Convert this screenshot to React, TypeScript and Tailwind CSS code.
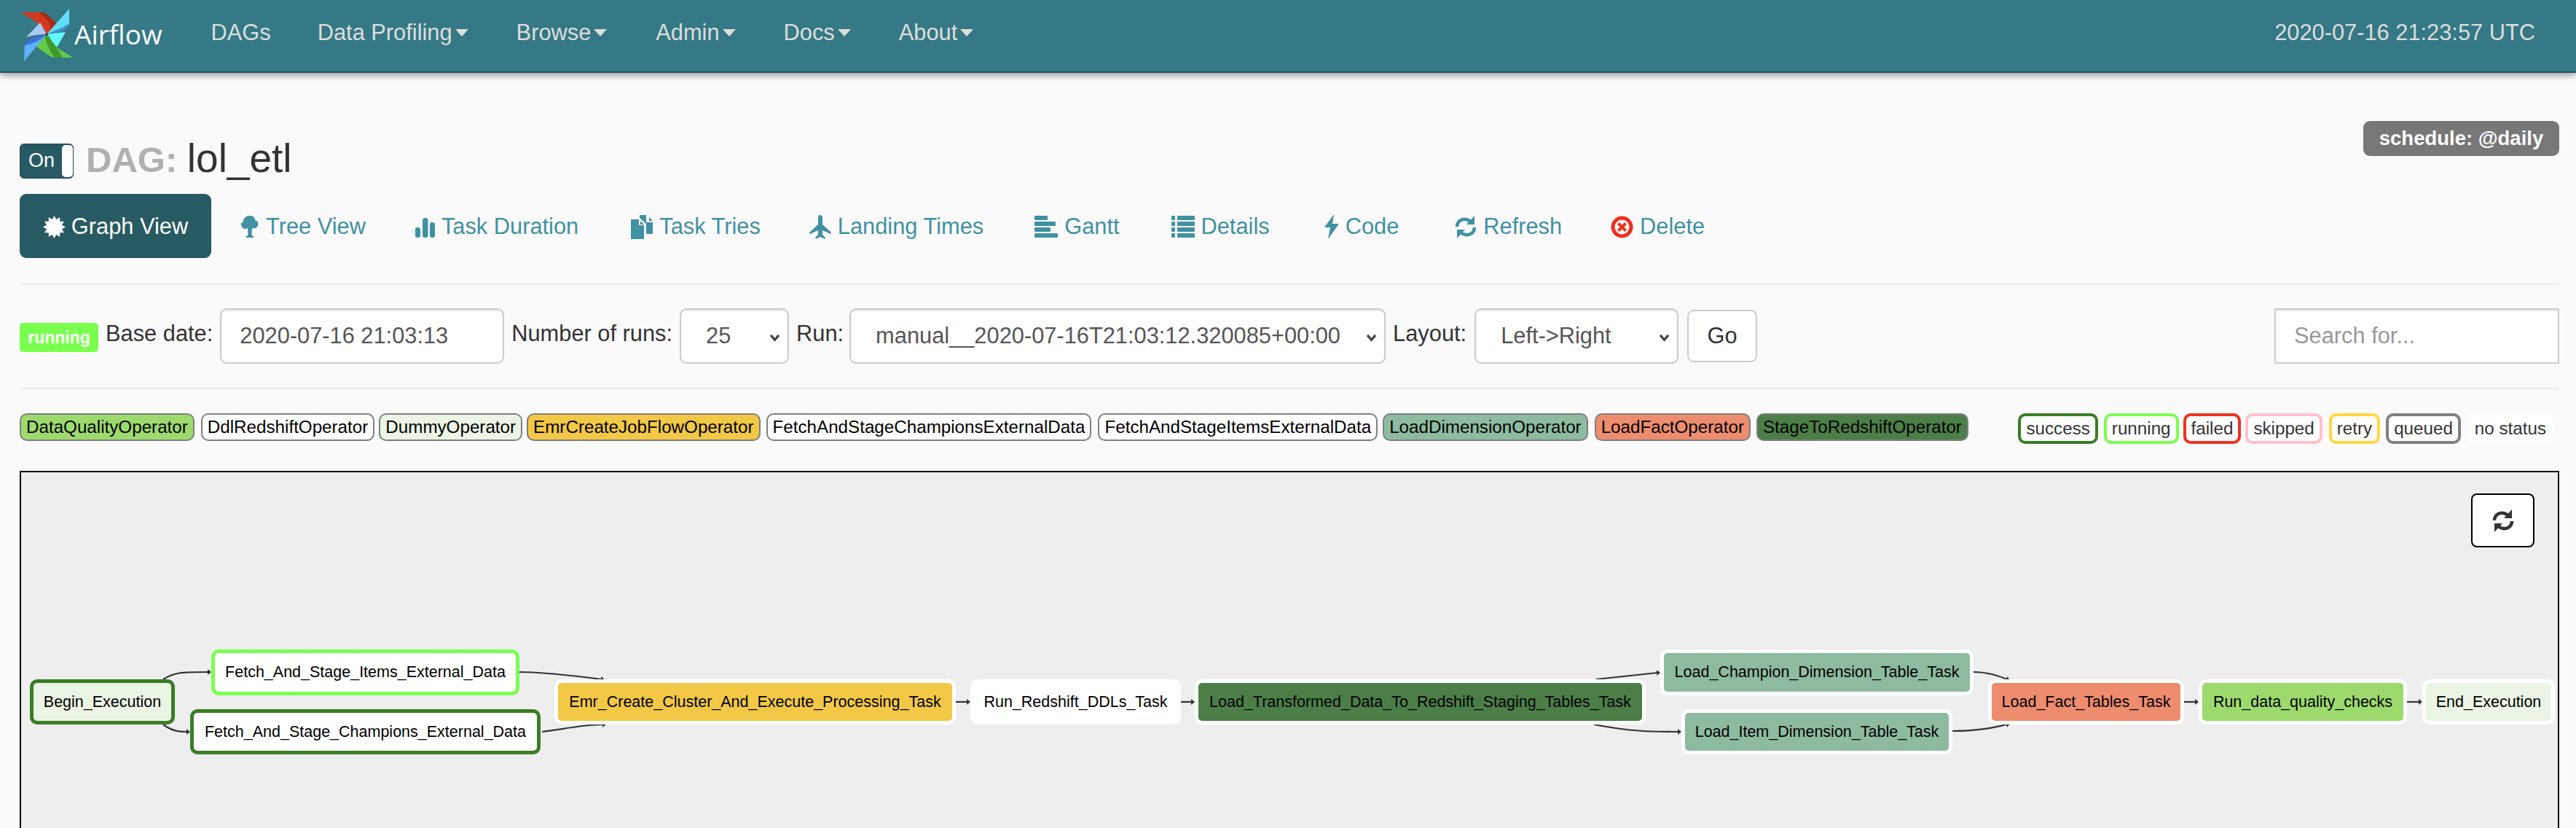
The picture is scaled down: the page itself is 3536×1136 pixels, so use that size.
import React from "react";

const FONT = "font-['Liberation_Sans',Arial,sans-serif]";

const burstPoints = () => {
  const pts: string[] = [];
  for (let i = 0; i < 24; i++) {
    const r = i % 2 === 0 ? 12 : 8.4;
    const a = (i * Math.PI) / 12;
    pts.push(`${(12 + r * Math.sin(a)).toFixed(2)},${(12 - r * Math.cos(a)).toFixed(2)}`);
  }
  return pts.join(" ");
};

const Logo = () => (
  <svg viewBox="0 0 75 75" className="w-[75px] h-[75px] shrink-0">
    {/* red blade */}
    <path d="M0 5 L30 5 Q36 6 53 24 L36 35 Q30 20 0 5Z" fill="#d5391c" />
    <path d="M25 5 L31 5 Q37 7 53 24 L42 31 Q42 16 25 5Z" fill="#a52b17" />
    {/* cyan blade */}
    <path d="M67 0 L67 22 L36 35Z" fill="#62dcfb" />
    <path d="M67 20 Q64 30 52 33 L36 35 Q52 30 67 20Z" fill="#3f93cf" />
    <path d="M36 35 L62 32 L50 53 L36 40Z" fill="#5ffbfd" />
    {/* green blade */}
    <path d="M19 49 L36 35 L50 53 L72 67 L47 67 Q40 67 19 49Z" fill="#62c94a" />
    <path d="M33 38 L38 36 Q46 50 50 53 L58 67 L47 67 Q38 55 33 38Z" fill="#3f9a2b" />
    {/* blue blade */}
    <path d="M5 72 L6 49 L36 35Z" fill="#5fb2ff" />
    <path d="M5 53 Q8 42 18 40 L36 35 Q22 48 7 50Z" fill="#3e6fe2" />
    <path d="M8 39 L27 19 L36 35 Q20 35 8 39Z" fill="#a9c9fb" />
    <circle cx="36" cy="35" r="1.5" fill="#111" />
  </svg>
);

const Caret = () => (
  <span className="inline-block ml-[4px] w-0 h-0 border-x-[9px] border-x-transparent border-t-[10px] border-t-[#dddddd]" />
);

const navItems = [
  { label: "DAGs", caret: false, gap: "ml-[67px]" },
  { label: "Data Profiling", caret: true, gap: "ml-[64px]" },
  { label: "Browse", caret: true, gap: "ml-[66px]" },
  { label: "Admin", caret: true, gap: "ml-[67px]" },
  { label: "Docs", caret: true, gap: "ml-[66px]" },
  { label: "About", caret: true, gap: "ml-[66px]" },
];

const Navbar = () => (
  <div className="h-[100px] bg-[#347985] border-b-2 border-[#2c4f57] shadow-[0_4px_8px_rgba(0,0,0,0.35)] flex items-center pl-[28px] pr-[56px] relative">
    <Logo />
    <span className="font-['Open_Sans',sans-serif] text-[37px] text-white ml-[-1px] mt-[-4px]">Airflow</span>
    {navItems.map((item) => (
      <div key={item.label} className={`${item.gap} flex items-center text-[30.8px] text-[#dddddd] mt-[-8px]`}>
        {item.label}
        {item.caret && <Caret />}
      </div>
    ))}
    <div className="ml-auto text-[30.8px] text-[#dddddd] mt-[-8px]">2020-07-16 21:23:57 UTC</div>
  </div>
);

const iconTeal = "#4091a2";

const icons: Record<string, React.ReactNode> = {
  graph: (
    <svg viewBox="0 0 24 24" className="w-[31px] h-[31px]">
      <polygon points={burstPoints()} fill="#fff" />
    </svg>
  ),
  tree: (
    <svg viewBox="0 0 26 30" className="w-[26px] h-[30px]" fill={iconTeal}>
      <path d="M13 0 C18 0 20 3 20 6 C24 7 25 10 24 13 C23 17 20 18 16 17 L15.5 26 L19 30 L7 30 L10.5 26 L10 17 C7 19 2 18 1 13 C0 10 3 9 4 8 C4 3 8 0 13 0Z" />
    </svg>
  ),
  stats: (
    <svg viewBox="0 0 27 30" className="w-[27px] h-[30px]" fill={iconTeal}>
      <rect x="0" y="16" width="7" height="14" rx="3" />
      <rect x="10" y="3" width="7.5" height="27" rx="3.5" />
      <rect x="20" y="9" width="7" height="21" rx="3" />
    </svg>
  ),
  tries: (
    <svg viewBox="0 0 30 33" className="w-[30px] h-[33px]" fill={iconTeal}>
      <path d="M0 6 L11 6 L11 14 L18 14 L18 33 L0 33Z" />
      <path d="M12 0 L21 0 L21 12 L12 4Z" />
      <path d="M21 10 L30 10 L30 26 L21 26Z" />
      <path d="M25 3 L30 8 L25 8Z" />
      <path d="M13 8 L18 13 L13 13Z" />
    </svg>
  ),
  plane: (
    <svg viewBox="0 0 30 33" className="w-[30px] h-[33px]" fill={iconTeal}>
      <path d="M15 0 C17 0 18 2 18 4 L18 13 L30 24 L29 26 L18 21 L18 27 L22 31 L21 33 L15 30 L9 33 L8 31 L12 27 L12 21 L1 26 L0 24 L12 13 L12 4 C12 2 13 0 15 0Z" />
    </svg>
  ),
  gantt: (
    <svg viewBox="0 0 32 30" className="w-[32px] h-[30px]" fill={iconTeal}>
      <rect x="0" y="0" width="18" height="6" rx="1" />
      <rect x="0" y="8" width="29" height="6" rx="1" />
      <rect x="0" y="16" width="22" height="6" rx="1" />
      <rect x="0" y="24" width="32" height="6" rx="1" />
    </svg>
  ),
  list: (
    <svg viewBox="0 0 32 30" className="w-[32px] h-[30px]" fill={iconTeal}>
      {[0, 8, 16, 24].map((y) => (
        <g key={y}>
          <rect x="0" y={y} width="5" height="6" rx="1" />
          <rect x="8" y={y} width="24" height="6" rx="1" />
        </g>
      ))}
    </svg>
  ),
  flash: (
    <svg viewBox="0 0 20 34" className="w-[20px] h-[34px]" fill={iconTeal}>
      <path d="M13 0 L11 13 L20 13 L5 34 L8 18 L0 18Z" />
    </svg>
  ),
  refresh: (
    <svg viewBox="0 0 30 33" className="w-[30px] h-[33px]" fill="none" stroke={iconTeal} strokeWidth="4.5">
      <path d="M3 16 C3 9 9 5 15 6 C19 6.5 22 9 24 11" />
      <path d="M27 17 C27 24 21 28 15 27 C11 26.5 8 24 6 22" />
      <path d="M27 1 L27 13 L16 13Z" fill={iconTeal} stroke="none" />
      <path d="M3 32 L3 20 L14 20Z" fill={iconTeal} stroke="none" />
    </svg>
  ),
  remove: (
    <svg viewBox="0 0 31 31" className="w-[31px] h-[31px]" fill="none">
      <circle cx="15.5" cy="15.5" r="12.5" stroke="#ef2f1f" strokeWidth="5" />
      <path d="M10.5 10.5 L20.5 20.5 M20.5 10.5 L10.5 20.5" stroke="#ef2f1f" strokeWidth="4" />
    </svg>
  ),
};

const tabs = [
  { label: "Tree View", icon: "tree", gap: "ml-[7px]" },
  { label: "Task Duration", icon: "stats", gap: "ml-[2px]" },
  { label: "Task Tries", icon: "tries", gap: "ml-[6px]" },
  { label: "Landing Times", icon: "plane", gap: "ml-[1px]" },
  { label: "Gantt", icon: "gantt", gap: "ml-[4px]" },
  { label: "Details", icon: "list", gap: "ml-[5px]" },
  { label: "Code", icon: "flash", gap: "ml-[9px]" },
  { label: "Refresh", icon: "refresh", gap: "ml-[11px]" },
  { label: "Delete", icon: "remove", gap: "ml-[1px]" },
];

const Tabs = () => (
  <div className="mt-[22px] flex items-center text-[30.8px]">
    <div className="h-[88px] w-[263px] rounded-[9px] bg-[#285a64] text-white flex items-center justify-center gap-[8px] pt-[2px]">
      {icons.graph}
      Graph View
    </div>
    {tabs.map((t) => (
      <div key={t.label} className={`${t.gap} h-[88px] px-[33px] pt-[2px] flex items-center gap-[9px] text-[#4091a2]`}>
        {icons[t.icon]}
        {t.label}
      </div>
    ))}
  </div>
);

const Chevron = () => (
  <svg viewBox="0 0 16 12" className="absolute right-[10px] top-[33px] w-[15px] h-[11px]" fill="none" stroke="#444" strokeWidth="3.5">
    <path d="M2 2 L8 9 L14 2" />
  </svg>
);

const Select = ({ value, width, pad }: { value: string; width: string; pad: string }) => (
  <div className={`relative h-[76px] ${width} shrink-0 bg-white border-2 border-[#cccccc] rounded-[9px] shadow-[inset_0_2px_2px_rgba(0,0,0,0.08)] flex items-center ${pad} text-[#555555]`}>
    {value}
    <Chevron />
  </div>
);

const Filters = () => (
  <div className="mt-[32px] h-[76px] flex items-center text-[30.8px] text-[#333333]">
    <span className="w-[108px] h-[40px] mt-[4px] rounded-[5px] bg-[#7bff4f] text-white text-[23px] font-bold flex items-center justify-center">
      running
    </span>
    <span className="ml-[10px] mt-[-6px]">Base date:</span>
    <div className="ml-[10px] h-[76px] w-[390px] shrink-0 bg-white border-2 border-[#cccccc] rounded-[9px] shadow-[inset_0_2px_2px_rgba(0,0,0,0.08)] flex items-center pl-[25px] text-[#555555]">
      2020-07-16 21:03:13
    </div>
    <span className="ml-[10px] mt-[-6px]">Number of runs:</span>
    <div className="ml-[10px]">
      <Select value="25" width="w-[150px]" pad="pl-[34px]" />
    </div>
    <span className="ml-[10px] mt-[-6px]">Run:</span>
    <div className="ml-[8px]">
      <Select value="manual__2020-07-16T21:03:12.320085+00:00" width="w-[736px]" pad="pl-[34px]" />
    </div>
    <span className="ml-[10px] mt-[-6px]">Layout:</span>
    <div className="ml-[11px]">
      <Select value="Left->Right" width="w-[280px]" pad="pl-[34px]" />
    </div>
    <div className="ml-[12px] h-[72px] w-[96px] bg-white border-2 border-[#cccccc] rounded-[9px] flex items-center justify-center">Go</div>
    <div className="ml-auto h-[76px] w-[391px] bg-white border-2 border-[#cccccc] shadow-[inset_0_2px_2px_rgba(0,0,0,0.08)] flex items-center pl-[25px] text-[#999999]">
      Search for...
    </div>
  </div>
);

const operators = [
  { label: "DataQualityOperator", bg: "bg-[#9dda6d]", gap: "" },
  { label: "DdlRedshiftOperator", bg: "bg-white", gap: "ml-[9px]" },
  { label: "DummyOperator", bg: "bg-[#ebf5e6]", gap: "ml-[6px]" },
  { label: "EmrCreateJobFlowOperator", bg: "bg-[#f2c846]", gap: "ml-[6px]" },
  { label: "FetchAndStageChampionsExternalData", bg: "bg-white", gap: "ml-[8px]" },
  { label: "FetchAndStageItemsExternalData", bg: "bg-white", gap: "ml-[9px]" },
  { label: "LoadDimensionOperator", bg: "bg-[#8dbb9f]", gap: "ml-[7px]" },
  { label: "LoadFactOperator", bg: "bg-[#ee8c6e]", gap: "ml-[9px]" },
  { label: "StageToRedshiftOperator", bg: "bg-[#4b7f47]", gap: "ml-[8px]" },
];

const statuses = [
  { label: "success", border: "border-[#3a7d25]", gap: "" },
  { label: "running", border: "border-[#7bff4f]", gap: "ml-[8px]" },
  { label: "failed", border: "border-[#f03020]", gap: "ml-[6px]" },
  { label: "skipped", border: "border-[#ffc0cb]", gap: "ml-[6px]" },
  { label: "retry", border: "border-[#ffd740]", gap: "ml-[9px]" },
  { label: "queued", border: "border-[#808080]", gap: "ml-[8px]" },
  { label: "no status", border: "border-[#fdfdfd]", gap: "ml-[8px]" },
];

const Legend = () => (
  <div className="mt-[33px] h-[42px] flex items-start text-[24.2px] leading-none whitespace-nowrap">
    {operators.map((o) => (
      <div key={o.label} className={`${o.gap} ${o.bg} h-[38px] px-[7px] border-2 border-[#7f7f7f] rounded-[10px] flex items-center text-black`}>
        {o.label}
      </div>
    ))}
    <div className="ml-auto flex mr-[7px]">
      {statuses.map((s) => (
        <div key={s.label} className={`${s.gap} ${s.border} h-[42px] px-[7px] border-[4px] rounded-[10px] flex items-center bg-white text-[#333333]`}>
          {s.label}
        </div>
      ))}
    </div>
  </div>
);

// page coords of the canvas padding box
const OX = 29;
const OY = 647;

const GREEN = "border-[#3a7d25]";
const WHITE = "border-white";

const nodes = [
  { label: "Begin_Execution", x: 41, y: 931, w: 199, h: 62, border: GREEN, bg: "bg-[#ebf5e6]" },
  { label: "Fetch_And_Stage_Items_External_Data", x: 290, y: 890, w: 423, h: 63, border: "border-[#7bff4f]", bg: "bg-white" },
  { label: "Fetch_And_Stage_Champions_External_Data", x: 261, y: 972, w: 481, h: 62, border: GREEN, bg: "bg-white" },
  { label: "Emr_Create_Cluster_And_Execute_Processing_Task", x: 761, y: 931, w: 551, h: 62, border: WHITE, bg: "bg-[#f2c846]" },
  { label: "Run_Redshift_DDLs_Task", x: 1332, y: 931, w: 289, h: 62, border: WHITE, bg: "bg-white" },
  { label: "Load_Transformed_Data_To_Redshift_Staging_Tables_Task", x: 1640, y: 931, w: 619, h: 62, border: WHITE, bg: "bg-[#4b7f47]" },
  { label: "Load_Champion_Dimension_Table_Task", x: 2279, y: 890, w: 430, h: 63, border: WHITE, bg: "bg-[#8dbb9f]" },
  { label: "Load_Item_Dimension_Table_Task", x: 2308, y: 972, w: 372, h: 62, border: WHITE, bg: "bg-[#8dbb9f]" },
  { label: "Load_Fact_Tables_Task", x: 2729, y: 931, w: 269, h: 62, border: WHITE, bg: "bg-[#ee8c6e]" },
  { label: "Run_data_quality_checks", x: 3018, y: 931, w: 286, h: 62, border: WHITE, bg: "bg-[#9dda6d]" },
  { label: "End_Execution", x: 3325, y: 931, w: 182, h: 62, border: WHITE, bg: "bg-[#ebf5e6]" },
];

const edges = [
  "M224 931 C240 921 250 921 286 921",
  "M224 993 C236 1002 246 1003 257 1003",
  "M713 921 C745 921 780 925 826 931",
  "M744 1003 C770 1000 800 993 828 993",
  "M1312 962 L1328 962",
  "M1621 962 L1636 962",
  "M2191 931 L2275 922",
  "M2188 993 C2240 1003 2270 1003 2304 1003",
  "M2709 921 C2730 921 2745 927 2755 931",
  "M2680 1002 C2720 1002 2740 996 2755 993",
  "M2998 962 L3014 962",
  "M3304 962 L3321 962",
];

const Graph = () => (
  <div className="relative mt-[37px] h-[600px] bg-[#eeeeee] border-2 border-black">
    <div className="absolute top-[29px] right-[32px] w-[87px] h-[74px] bg-white border-2 border-black rounded-[8px] flex items-center justify-center">
      <svg viewBox="0 0 30 33" className="w-[30px] h-[33px]" fill="none" stroke="#333" strokeWidth="4.5">
        <path d="M3 16 C3 9 9 5 15 6 C19 6.5 22 9 24 11" />
        <path d="M27 17 C27 24 21 28 15 27 C11 26.5 8 24 6 22" />
        <path d="M27 1 L27 13 L16 13Z" fill="#333" stroke="none" />
        <path d="M3 32 L3 20 L14 20Z" fill="#333" stroke="none" />
      </svg>
    </div>
    <svg className="absolute inset-0 w-full h-full" viewBox={`${OX} ${OY} 3482 596`} preserveAspectRatio="xMinYMin meet">
      <defs>
        <marker id="arrow" markerWidth="6" markerHeight="8" refX="1" refY="4" orient="auto" markerUnits="userSpaceOnUse">
          <path d="M0 0 L5 4 L0 8Z" fill="#333" />
        </marker>
      </defs>
      {edges.map((d) => (
        <path key={d} d={d} fill="none" stroke="#333" strokeWidth="2.2" markerEnd="url(#arrow)" />
      ))}
    </svg>
    {nodes.map((n) => (
      <div
        key={n.label}
        className={`absolute ${n.border} ${n.bg} border-[5px] rounded-[10px] flex items-center justify-center text-[21.5px] text-black whitespace-nowrap`}
        style={{ left: n.x - OX, top: n.y - OY, width: n.w, height: n.h }}
      >
        {n.label}
      </div>
    ))}
  </div>
);

const App = () => {
  return (
    <div className={`${FONT} w-[3536px] h-[1136px] overflow-hidden bg-[#fafafa] text-[#333333]`}>
      <Navbar />
      <div className="pl-[27px] pr-[23px]">
        <div className="mt-[66px] h-[78px] flex items-start justify-between">
          <div className="mt-[30px] flex items-center">
            <div className="w-[74px] h-[48px] rounded-[6px] bg-[#285a64] border border-[#1d4650] text-white text-[27px] flex items-center pl-[11px] relative">
              On
              <span className="absolute right-0 top-[1px] bottom-[1px] w-[15px] bg-white rounded-[5px]" />
            </div>
            <h1 className="ml-[17px] text-[55px] leading-none mt-[-6px] text-[#333333]">
              <span className="font-bold text-[#b0b0b0] text-[49px]">DAG: </span>
              lol_etl
            </h1>
          </div>
          <div className="h-[48px] w-[269px] rounded-[9px] bg-[#777777] text-white text-[27.5px] font-bold flex items-center justify-center">
            schedule: @daily
          </div>
        </div>
        <Tabs />
        <div className="mt-[35px] h-[2px] bg-[#eeeeee]" />
        <Filters />
        <div className="mt-[33px] h-[2px] bg-[#eeeeee]" />
        <Legend />
        <Graph />
      </div>
    </div>
  );
};

export default App;
